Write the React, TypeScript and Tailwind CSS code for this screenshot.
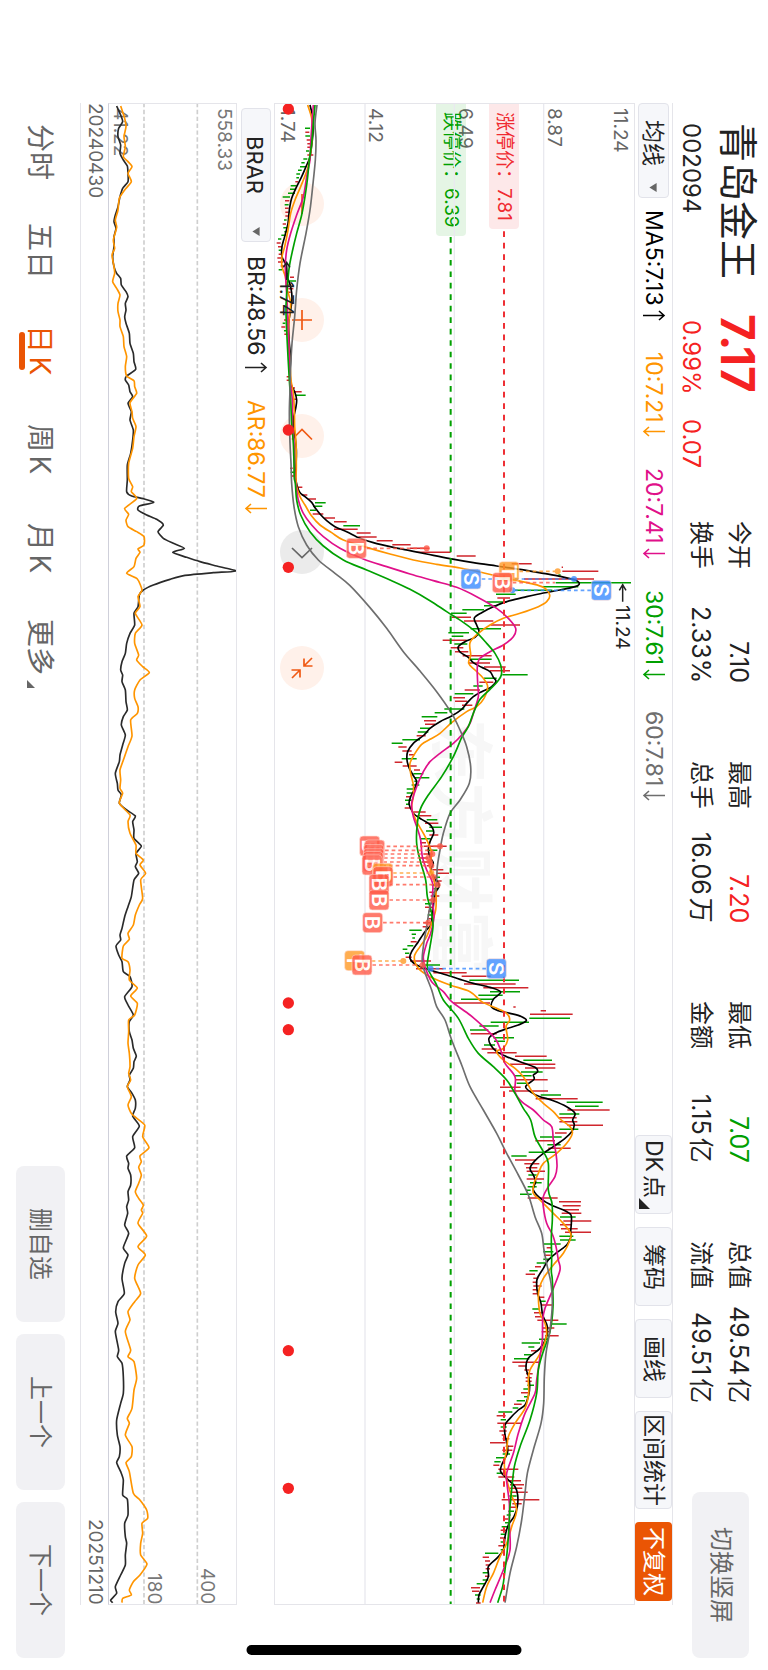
import React from "react";

type Segment = [offset: number, points: string];

/* Chart geometry is stored in thirds of a pixel; v runs along time, u along price. */

function collect(segments: Segment[]): number[][] {
  const out: number[][] = [];
  let last = -Infinity;
  for (const [offset, points] of segments) {
    for (const pair of points.split(" ")) {
      const [u, v] = pair.split(",").map(Number);
      if (v + offset > last) {
        last = v + offset;
        out.push([u, last]);
      }
    }
  }
  return out;
}

function smooth(segments: Segment[], tension: number): string {
  const p = collect(segments);
  let d = `M${p[0][0]} ${p[0][1]}`;
  for (let i = 0; i < p.length - 1; i++) {
    const a = p[Math.max(i - 1, 0)];
    const b = p[i];
    const c = p[i + 1];
    const e = p[Math.min(i + 2, p.length - 1)];
    d += `C${b[0] + (c[0] - a[0]) * tension} ${b[1] + (c[1] - a[1]) * tension} ${c[0] - (e[0] - b[0]) * tension} ${c[1] - (e[1] - b[1]) * tension} ${c[0]} ${c[1]}`;
  }
  return d;
}

const MA5: Segment[] = [
  [0, "150,45 158,80 160,110 157,150 150,200 138,230 125,260 110,290 95,325 88,360 84,400 74,440 66,470 66,500 78,525 82,560 92,590 96,625 92,660 86,700 88,760 92,800 90,850 94,885 104,905 110,930 107,955 100,990 104,1030 109,1080 108,1130 107,1165"],
  [1050, "118,155 135,170 155,187 163,200 180,222 200,242 225,260 260,275 300,295 340,308 400,322 450,332 500,342 570,356 640,368 710,378 780,388 850,400 900,409 945,420 958,431 945,440 900,450 850,459 800,470 750,482 700,500 665,518 643,534 650,555 657,575 645,592 615,605 595,620 600,636 625,652 640,668 665,682 690,695 700,712 708,724 692,742 665,755 640,770 620,790 605,808 575,828 540,845 510,865 492,885"],
  [1830, "460,130 443,155 441,180 448,205 462,230 470,245 462,270 452,290 447,310 452,325 462,342 485,358 508,372 518,385 521,400 510,425 505,450 512,475 520,490 512,510 520,530 538,555 528,575 522,600 518,640 512,675 495,695 475,725 455,755 450,775 470,795 510,810 560,825 600,838"],
  [2610, "640,70 690,82 722,96 700,118 694,140 715,152 750,160 785,170 799,182 775,195 740,206 705,220 687,235 692,255 710,275 740,290 780,305 825,322 833,335 820,345 822,358 797,380 815,398 840,410 880,422 920,440 945,460 938,480 943,495 935,515 915,535 880,560 850,580 825,602 810,625 820,645 827,665 820,690 845,718 880,738 915,752 933,765 934,790 932,815 933,830 920,855 890,878 865,900 850,925 832,955"],
  [3510, "830,75 833,100 843,130 848,165 862,200 858,235 840,265 805,295 798,325 806,350 809,380 806,405 795,435 775,450 750,475 735,495 735,525 742,555 742,580 725,615 722,635 740,655 765,680 773,705 772,740 762,770 745,795 735,830 730,870 710,895 685,920 685,950 670,980 657,1005 655,1028"],
];

const MA10: Segment[] = [
  [0, "143,45 155,85 157,130 153,180 143,235 122,290 105,330 92,370 84,420 74,470 66,500 66,530 76,560 82,600 92,640 86,700 86,760 90,820 93,870 100,910 103,960 104,1010 108,1060 109,1130 108,1165"],
  [1050, "110,140 120,170 135,195 155,228 180,255 215,278 250,300 320,322 390,342 460,360 530,373 600,384 660,396 710,408 765,420 810,430 850,442 869,465 860,485 835,500 780,520 730,535 690,555 655,580 630,608 632,645 626,670 645,690 670,715 683,740 672,775 650,800 620,815 575,848 540,880 510,898"],
  [1830, "485,133 465,160 450,190 452,220 460,255 460,290 455,325 470,365 490,400 505,430 515,460 510,500 522,540 528,580 527,630 515,670 500,710 480,740 463,770 475,805 510,830"],
  [2610, "570,75 630,95 665,125 710,145 740,160 749,180 738,200 743,240 730,265 710,275 730,300 765,325 790,350 820,400 850,430 880,455 900,477 930,500 937,520 920,550 890,580 850,610 835,640 822,670 820,700 840,720 880,760 910,790 932,820 930,840 910,880 880,915 850,955"],
  [3510, "838,85 835,110 840,160 855,190 860,220 850,260 835,290 810,330 805,360 806,400 795,445 765,490 745,530 740,570 733,610 738,650 752,700 770,750 755,800 740,850 720,890 700,940 680,980 668,1028"],
];

const MA20: Segment[] = [
  [0, "160,45 156,100 152,160 150,210 140,260 130,320 110,375 92,430 80,480 76,530 78,580 82,650 84,720 88,800 90,870 97,930 97,1000 102,1060 103,1120 104,1165"],
  [1050, "107,130 115,180 130,220 155,255 190,290 240,325 310,357 380,380 450,402 520,422 590,442 650,470 710,505 745,535 767,565 760,590 730,615 690,635 660,655 652,680 653,730 655,770 643,810 630,850 605,885"],
  [1830, "580,130 540,160 510,185 490,215 470,260 455,310 460,350 472,385 482,420 487,470 500,510 518,550 517,600 522,650 512,700 500,730 490,770 495,800"],
  [2610, "515,65 550,95 575,125 630,165 670,200 705,235 722,270 735,310 765,350 765,395 785,425 820,450 850,480 875,500 880,540 888,580 891,620 885,650 865,680 850,710 850,740 860,790 878,825 888,860 895,900 900,930"],
  [3510, "880,85 855,145 848,180 847,240 840,290 830,360 825,400 795,460 775,520 760,580 740,640 742,680 748,730 748,790 750,870 730,930 705,990 690,1028"],
];

const MA30: Segment[] = [
  [0, "165,45 160,100 155,160 148,210 142,270 135,320 125,375 110,430 98,480 88,530 82,590 78,650 80,720 84,800 88,870 92,930 95,1000 100,1060 102,1120 103,1165"],
  [1050, "106,130 110,180 122,225 150,275 190,318 250,360 320,390 390,420 450,448 510,482 560,515 610,547 650,578 680,610 705,640 722,675 724,705 712,725 690,748 660,778 640,820 625,860 605,893"],
  [1830, "580,170 545,230 505,285 482,325 472,370 470,430 480,480 497,540 502,590 515,640 519,680 510,740 502,790"],
  [2610, "505,30 530,75 550,120 595,175 625,235 655,280 700,320 740,360 765,400 790,445 812,480 825,530 850,575 865,610 865,690 876,730 877,780 874,830 875,900 874,935"],
  [3510, "877,60 879,140 870,215 848,280 835,330 830,400 810,480 780,560 763,620 755,690 750,740 747,800 742,870 735,930 728,980 713,1028"],
];

const MA60: Segment[] = [
  [0, "171,45 165,100 168,150 166,210 158,290 150,360 138,430 120,520 110,600 104,680 96,760 92,830 90,900 88,970 90,1060 93,1120"],
  [1050, "95,130 102,200 115,260 140,315 175,360 225,400 270,437 330,503 380,565 430,635 480,693 530,755"],
  [1830, "575,40 600,90 620,140 632,200 628,250 600,300 570,340 550,400 540,450 532,500 528,560 510,620 500,680 490,740"],
  [2610, "488,15 515,90 530,140 555,180 575,240 605,315 630,380 670,450 710,520 740,580 775,645 805,705 825,770 845,820 852,870 862,920"],
  [3510, "873,70 877,130 870,210 858,280 853,350 851,430 843,490 820,570 802,640 795,700 785,780 770,860 750,940 735,1028"],
];

const BR: Segment[] = [
  [0, "350,48 362,75 368,95 356,115 354,140 362,165 360,190 370,210 382,228 384,250 384,275 368,295 360,320 354,350 346,375 342,395 348,415 342,440 342,470 338,500 342,530 350,550 362,565 364,585 378,605 384,620 376,640 378,660 374,680 378,700 388,730 390,760 400,790 402,815 407,838 380,858 376,870 386,885 390,905 398,920 384,940 394,965 390,990 400,1020 398,1050 392,1090 382,1125 382,1170 380,1205 395,1218"],
  [1170, "430,56 461,67 418,78 414,90 440,105 470,118 490,135 474,155 490,175 520,190 553,205 518,217 560,232 600,245 650,258 708,273 640,278 555,286 510,298 460,315 430,330 418,345 414,380 402,400 404,435 390,460 380,490 376,520 366,545 362,570 368,585 366,605 376,630 378,665 382,690 370,710 364,735 376,765 368,795 360,825 358,845 346,880 352,910 354,930 364,945 358,970 380,990 406,1008 398,1025 402,1050 402,1075 424,1098 408,1120 412,1145 406,1160 416,1180 402,1200"],
  [2370, "394,50 384,80 374,110 366,145 360,165 362,180 348,198 356,225 366,245 370,275 390,290 396,320 374,350 384,375 400,405 388,425 388,455 396,480 400,505 409,528 402,545 400,565 388,585 390,600 382,620 396,640 406,660 406,685 398,708 418,738 398,770 404,803 380,828 386,850 384,865 392,885 392,915 384,935 386,960 380,980 383,1000 374,1035 386,1060 370,1103 384,1125 374,1150 366,1195"],
  [3510, "373,100 354,125 347,155 354,190 346,215 356,270 352,290 366,310 370,350 370,400 362,430 350,480 352,525 360,560 358,590 350,608 362,635 370,660 368,705 382,718 384,765 374,790 376,830 380,850 376,885 376,915 362,945 346,980 350,1000 332,1020 338,1028"],
];

const AR: Segment[] = [
  [0, "362,48 374,85 378,110 372,140 376,170 370,200 384,215 396,230 384,250 394,275 374,300 358,325 354,360 346,390 350,412 340,450 344,475 336,495 342,530 344,550 338,575 350,595 360,615 354,640 354,665 360,690 360,710 370,740 372,770 380,800 376,830 380,858 402,872 404,890 410,910 390,938 396,965 398,985 408,1010 402,1040 398,1075 386,1120 386,1165 398,1190 394,1205 410,1226"],
  [1170, "374,85 386,103 378,120 384,140 410,155 432,170 432,195 414,207 420,217 408,235 402,260 380,280 412,297 426,330 414,350 420,380 406,400 426,435 406,460 404,490 416,525 410,540 428,560 448,578 420,600 404,630 404,655 414,680 412,700 392,720 396,768 384,800 372,835 360,870 362,900 360,925 368,940 358,970 390,1005 384,1025 390,1060 408,1095 408,1120 430,1140 420,1155 437,1180 422,1200"],
  [2370, "428,55 418,75 406,105 400,135 384,160 388,178 370,198 366,235 384,245 390,270 388,300 412,324 392,348 412,370 404,405 386,420 386,455 384,490 388,520 390,560 386,580 392,600 382,620 394,650 384,675 396,703 434,735 428,770 447,803 420,828 424,845 416,862 424,885 416,910 406,935 416,955 430,975 424,990 428,1000 414,1030 440,1068 414,1100 436,1125 414,1155 404,1195"],
  [3510, "422,100 404,125 384,155 390,180 376,215 392,270 384,290 402,305 410,355 402,390 396,445 382,475 388,490 376,525 396,560 394,590 378,608 388,635 400,700 418,718 440,750 443,775 426,790 428,820 422,850 422,885 441,912 420,945 400,965 388,990 394,1005 368,1015 366,1028"],
];

/* R = up day, G = down day, then time, low, high. */
const CANDLES: Segment[] = [
  [0, "G115,135,150 R127,136,148 G138,136,150 R150,140,152 R161,142,152 R172,142,152 G183,138,148 R195,142,160 G207,130,142 G218,124,134 G230,120,138 G241,114,125 G252,109,120 G263,109,117 R275,106,114 G287,92,110 G298,90,108 G310,84,105 G321,68,90 R332,75,88 G344,74,86 R355,75,86 R367,76,86 R378,76,88 G390,72,80 R402,68,78 G413,70,82 G425,73,82 G436,64,74 G447,54,64 R459,50,62 R470,54,66 G481,56,66 R493,56,68 R504,52,66 R516,54,70 R528,62,74 G539,56,66 R551,72,84 R562,90,102 G573,88,108 R585,76,88 R596,85,100 R607,80,92 R690,72,84 G700,68,76 R711,64,76 G722,72,80 R733,73,83 R860,80,88 R871,80,90 R894,95,105 R905,100,125 G916,105,137 R928,98,108 R1135,90,98 G1147,92,102 R1158,94,104"],
  [1050, "R142,113,127 R165,125,142 R177,145,168 G188,165,197 G199,160,187 G211,150,168 R222,158,190 R234,193,225 R245,222,260 G257,250,300 R268,222,293 R279,290,332 R291,295,350 R302,350,398 R314,397,452 R325,450,508 R337,470,572 R348,590,647 R371,755,815 R382,905,909 R394,907,1015 G405,895,902 R417,792,1002 G428,887,1113 G440,848,955 G451,765,877 G463,708,767 R474,712,750 G486,680,740 G497,672,712 G509,607,672 G520,573,620 R532,575,633 R543,612,700 R555,692,780 G566,632,723 G578,565,627 G589,575,610 R601,548,620 G612,583,622 R623,572,610 R635,585,625 R647,608,695 G658,628,695 R669,625,690 R681,672,737 R692,690,750 G704,727,803 G715,672,710 R727,658,700 G738,640,668 R750,614,660 G761,584,640 R773,580,615 R784,585,622 R796,606,637 G807,553,613 G818,524,562 G830,485,532 R842,492,528 R853,495,525 G865,480,510 G876,473,505 R887,470,497"],
  [1830, "G119,427,480 G130,395,428 R141,415,440 R153,427,455 R164,447,463 G176,425,470 R187,404,427 R198,428,470 R210,462,480 G221,460,490 G233,465,508 G244,463,472 G255,455,478 G267,440,465 G279,440,460 R290,438,450 G301,435,455 G313,438,450 R324,434,455 R336,460,497 R347,472,514 G359,500,532 R370,495,535 G382,508,546 G393,498,520 R405,508,535 G416,483,512 R428,480,498 R439,492,560 G451,500,532 R462,490,518 R474,480,505 R486,485,515 R497,500,512 R509,517,550 R520,530,567 G532,518,540 R543,520,545 G555,515,540 G566,520,535 R577,508,525 R588,512,538 R600,505,528 G611,495,515 R622,495,520 R634,505,520 G645,503,520 R656,505,520 R668,490,512 R680,488,505 G691,448,485 G703,455,468 G714,457,465 R725,452,470 G737,442,460 G748,428,442 G760,435,448 R772,437,455 R783,450,513 G795,490,540 R806,468,550 R818,520,620 R829,605,692 G841,628,777 R852,612,767 R863,670,805 G875,690,780 G886,655,728 G898,603,700"],
  [2610, "R129,580,690 R141,760,767 R152,842,858 R163,810,938 G175,808,930 G187,692,807 G198,658,716 G210,630,685 R221,632,710 G233,700,762 G244,702,735 G255,672,705 R267,665,710 R278,682,770 R289,765,860 G301,790,876 R313,750,886 R324,795,886 G336,783,848 G347,765,815 R359,765,863 G370,770,800 R382,720,782 R393,747,864 G405,842,903 R416,827,953 G427,920,1028 G439,945,1016 R450,922,1049 G462,898,958 R473,895,950 R485,898,952 R496,922,1029 G508,898,955 R519,885,920 G531,840,905 R542,826,885 G554,862,902 R565,865,932 G577,806,885 G588,754,800 R600,765,825 R611,793,838 R623,798,832 R634,800,855 G645,805,830 R657,800,852 G668,810,845 G680,803,830 G691,798,812 G703,780,815 R714,803,893 R725,897,963 R737,908,962 R749,910,957 R760,905,964 G771,900,947 R783,910,994 R794,900,935 R806,903,953 R817,915,993 G829,898,940 G840,900,947 G852,850,902 R863,860,873 G875,850,880 R886,852,872 G898,850,868 G909,830,857 R920,825,843 G932,808,833 R943,797,825 R955,820,835"],
  [3510, "R67,818,832 R78,820,845 R89,818,832 R101,818,835 R112,835,853 G124,840,857 R135,845,880 G147,817,838 R158,822,845 R170,825,845 R181,832,895 G192,870,920 R204,848,883 R215,845,870 R227,855,896 G238,837,862 G249,785,840 G261,805,823 R272,813,830 G284,792,815 G296,762,808 R307,757,838 R318,775,800 R330,793,808 R341,798,818 R353,797,815 R364,797,815 G376,802,822 G387,790,810 R398,783,810 G410,792,802 G422,770,795 R433,762,785 G444,758,775 G456,715,757 R467,710,737 G479,722,738 R490,712,783 G501,722,740 R513,718,740 R525,725,738 R536,728,748 R548,690,737 R559,737,760 R571,727,757 G582,728,750 G593,708,733 G605,703,722 R616,700,718 R628,715,775 G640,710,728 R651,715,763 R662,740,783 R674,750,792 R685,748,787 R697,752,803 G708,748,770 R719,725,838 R731,757,785 R742,750,768 G754,745,762 G765,740,752 R777,730,745 G788,735,750 G800,725,745 R811,722,740 G823,722,735 R834,720,738 G846,722,735 R857,715,738 G869,722,735 G880,675,715 R892,668,687 R903,675,690 R915,677,690 R926,677,690 G938,668,685 R949,675,688 G960,668,685 G971,650,675 R983,633,660 R994,636,658 G1005,645,662 G1017,650,660 R1029,648,662"],
];

function candlePath(kind: string): string {
  let d = "";
  for (const [offset, list] of CANDLES) {
    for (const item of list.split(" ")) {
      if (item[0] !== kind) continue;
      const [v, lo, hi] = item.slice(1).split(",").map(Number);
      d += `M${lo} ${v + offset}H${hi}`;
    }
  }
  return d;
}

const TRADE_COLORS: Record<string, string> = { B: "#ff5a48", S: "#3b8bff", T: "#ff9a26" };

/* kind, badge u, badge v, leader v, leader start, leader end, whether the end has a dot */
const TRADES: [string, number, number, number, number, number, boolean][] = [
  ["B", 289, 1375, 1375, 320, 500, true],
  ["T", 747, 1445, 1444, 778, 893, true],
  ["S", 633, 1467, 1467, 665, 942, true],
  ["B", 727, 1478, 1478, 758, 885, false],
  ["S", 1024, 1501, 1501, 993, 757, true],
  ["B", 329, 2268, 2269, 360, 540, true],
  ["B", 344, 2280, 2281, 375, 520, false],
  ["B", 341, 2293, 2292, 372, 517, true],
  ["B", 341, 2305, 2304, 372, 505, true],
  ["B", 339, 2315, 2316, 370, 510, true],
  ["B", 336, 2325, 2327, 367, 514, true],
  ["T", 368, 2350, 2349, 399, 514, true],
  ["B", 369, 2360, 2361, 400, 520, true],
  ["B", 357, 2383, 2384, 388, 533, true],
  ["B", 357, 2430, 2430, 388, 520, true],
  ["B", 338, 2498, 2498, 369, 505, true],
  ["T", 284, 2612, 2613, 315, 430, true],
  ["B", 306, 2625, 2625, 337, 488, true],
  ["S", 709, 2636, 2636, 678, 512, true],
];

const EVENT_DOTS = [57, 1020, 1432, 2739, 2819, 3782, 4195];

function PriceChart() {
  return (
    <svg
      viewBox="45 42 1077 4500"
      preserveAspectRatio="none"
      className="pointer-events-none absolute inset-0 h-full w-full [writing-mode:horizontal-tb]"
      fill="none"
      role="img"
      aria-label="日K线图"
    >
      <path d="M315 39V4545M583 39V4545M851 39V4545" stroke="#e9e9ef" strokeWidth="4" />
      <path d={candlePath("R")} stroke="#d0262d" strokeWidth="4.5" />
      <path d={candlePath("G")} stroke="#009f00" strokeWidth="4.5" />
      <g strokeWidth="5" strokeLinejoin="round">
        <path d={smooth(MA5, 0.16)} stroke="#000" />
        <path d={smooth(MA10, 0.16)} stroke="#ff9500" />
        <path d={smooth(MA20, 0.16)} stroke="#e0108a" />
        <path d={smooth(MA30, 0.16)} stroke="#00a000" />
        <path d={smooth(MA60, 0.16)} stroke="#6e6e6e" />
      </g>
      <path d="M732 424V4545" stroke="#ee2f35" strokeWidth="6" strokeDasharray="17 17.4" />
      <path d="M572 441V4545" stroke="#00a000" strokeWidth="6" strokeDasharray="17 17.4" />
      {EVENT_DOTS.map((v) => (
        <circle key={v} cx="85" cy={v} r="17" fill="#f52222" />
      ))}
      {TRADES.map(([kind, , , v, from, to, dot], i) => (
        <g key={i} opacity="0.8">
          <path d={`M${from} ${v}H${to}`} stroke={TRADE_COLORS[kind]} strokeWidth="5" strokeDasharray="11 9" />
          {dot && <circle cx={to} cy={v} r="9" fill={TRADE_COLORS[kind]} />}
        </g>
      ))}
      {TRADES.map(([kind, u, v], i) => (
        <g key={i} transform={`translate(${u} ${v}) rotate(90)`} opacity="0.8">
          <rect x="-30" y="-30" width="60" height="60" rx="10" fill={TRADE_COLORS[kind]} stroke="#ffd9d0" strokeWidth="2" />
          <text y="22" textAnchor="middle" className="font-['Inter',sans-serif] text-[62px] font-semibold" fill="#fff">
            {kind}
          </text>
        </g>
      ))}
      <g stroke="#222" strokeWidth="4.5">
        <path d="M1088 1535V1482M1078 1501L1088 1484L1098 1501" />
        <path d="M80 570V515M70 532L80 517L90 532" />
      </g>
      <g fill="#222" className="font-['Inter',sans-serif] text-[57px]">
        <text transform="translate(1069 1545) rotate(90)">11.24</text>
        <text transform="translate(60 574) rotate(90)">1.74</text>
      </g>
    </svg>
  );
}

function BrarChart() {
  return (
    <svg
      viewBox="327 42 381 4500"
      preserveAspectRatio="none"
      className="absolute inset-0 h-full w-full"
      fill="none"
      role="img"
      aria-label="BRAR"
    >
      <path d="M432 39V4545M592 39V4545" stroke="#cfcfcf" strokeWidth="5" strokeDasharray="13 7.6" />
      <g strokeWidth="5" strokeLinejoin="round">
        <path d={smooth(BR, 0.1)} stroke="#2a2a2a" />
        <path d={smooth(AR, 0.1)} stroke="#ff9500" />
      </g>
    </svg>
  );
}

function Arrow({ up = false }: { up?: boolean }) {
  return (
    <svg viewBox="0 0 24 11" className="h-[11px] w-6 shrink-0" fill="none" stroke="currentColor" strokeWidth="1.6" aria-hidden="true">
      {up ? <path d="M1 5.5H22M17 1L22 5.5L17 10" /> : <path d="M23 5.5H2M7 1L2 5.5L7 10" />}
    </svg>
  );
}

function Caret() {
  return (
    <svg viewBox="0 0 8 10" className="pointer-events-none absolute bottom-[6px] left-[11px] h-[9px] w-2" aria-hidden="true">
      <path d="M0 5L8 0V10Z" fill="#666" />
    </svg>
  );
}

const STATS = [
  { label: "今开", value: "7.10", tone: "" },
  { label: "最高", value: "7.20", tone: "text-[#f52222]" },
  { label: "最低", value: "7.07", tone: "text-[#009f00]" },
  { label: "总值", value: "49.54亿", tone: "" },
  { label: "换手", value: "2.33%", tone: "" },
  { label: "总手", value: "16.06万", tone: "" },
  { label: "金额", value: "1.15亿", tone: "" },
  { label: "流值", value: "49.51亿", tone: "" },
];

const AVERAGES = [
  { text: "MA5:7.13", tone: "text-black", up: true },
  { text: "10:7.21", tone: "text-[#ff9500]", up: false },
  { text: "20:7.41", tone: "text-[#e0108a]", up: false },
  { text: "30:7.61", tone: "text-[#00a000]", up: false },
  { text: "60:7.81", tone: "text-[#6e6e6e]", up: false },
];

const PERIODS = ["分时", "五日", "日K", "周K", "月K", "更多"];

function Header() {
  return (
    <header className="flex w-[95px] shrink-0 pt-[123px] pb-3">
      <div className="grid h-[398px] shrink-0 grid-cols-[191px_auto] content-start justify-start pr-2">
        <h1 className="text-[39px] leading-[44px]">青岛金王</h1>
        <strong className="text-[46px] leading-[44px] font-bold text-[#f52222]">7.17</strong>
        <span className="mr-[11px] text-[24px] leading-[28px]">002094</span>
        <span className="mr-[11px] flex gap-6 pt-[6px] text-[24px] leading-[28px] text-[#f52222]">
          <span>0.99%</span>
          <span>0.07</span>
        </span>
      </div>
      <dl className="grid shrink-0 grid-cols-[repeat(4,162px)] content-start gap-x-[78px] pr-[10px] text-[24px] leading-[38px]">
        {STATS.map((s) => (
          <div key={s.label} className="flex justify-between">
            <dt>{s.label}</dt>
            <dd className={`text-[25px] ${s.tone}`}>{s.value}</dd>
          </div>
        ))}
      </dl>
      <button type="button" className="mt-auto mr-[19px] flex h-[166px] w-[57px] items-center justify-center rounded-lg bg-[#f1f1f4] text-[24px] text-[#666]">
        切换竖屏
      </button>
    </header>
  );
}

function Toolbar() {
  const box = "flex h-[79px] w-[37px] items-center justify-center rounded border border-[#e2e3ea] bg-[#f6f7fa]";
  return (
    <div className="mt-[103px] mb-[65px] flex w-[38px] shrink-0 items-center border-r border-[#e5e5ea] text-[23px] leading-[30px]">
      <div className="relative h-[95px] w-[31px]">
        <select aria-label="均线" className="h-full w-full appearance-none rounded border border-[#e2e3ea] bg-[#f6f7fa] pt-4">
          <option>均线</option>
        </select>
        <Caret />
      </div>
      <div className="mt-3 flex items-center gap-[31px]">
        {AVERAGES.map((a) => (
          <span key={a.text} className={`flex items-center gap-1 ${a.tone}`}>
            {a.text}
            <Arrow up={a.up} />
          </span>
        ))}
      </div>
      <div className="mt-auto mb-1 flex gap-[13px]">
        <button type="button" className={`${box} relative pb-3`}>
          DK点
          <svg viewBox="0 0 11 11" className="absolute bottom-1 left-[3px] h-[11px] w-[11px]" aria-hidden="true">
            <path d="M0 0L11 11H0Z" fill="#222" />
          </svg>
        </button>
        <button type="button" className={box}>筹码</button>
        <button type="button" className={box}>画线</button>
        <button type="button" className="flex h-[98px] w-[37px] items-center justify-center rounded border border-[#e2e3ea] bg-[#f6f7fa]">区间统计</button>
        <button type="button" className="flex h-[79px] w-[37px] items-center justify-center rounded bg-[#ea5504] text-white">不复权</button>
      </div>
    </div>
  );
}

function ChartTools() {
  const round = "flex size-[44px] items-center justify-center rounded-full bg-[#fff1ea]";
  const icon = "h-[22px] w-[22px]";
  const stroke = { fill: "none", stroke: "#f05a14", strokeWidth: 1.7 };
  return (
    <div className="absolute top-[78px] left-[5px] flex gap-[72px]">
      <button type="button" aria-label="缩小" className={round}>
        <svg viewBox="0 0 22 22" className={icon} {...stroke}><path d="M11 1V21" /></svg>
      </button>
      <button type="button" aria-label="放大" className={round}>
        <svg viewBox="0 0 22 22" className={icon} {...stroke}><path d="M11 1V21M1 11H21" /></svg>
      </button>
      <button type="button" aria-label="左移" className={round}>
        <svg viewBox="0 0 22 22" className={icon} {...stroke}><path d="M1 14.5L11 4.5L21 14.5" /></svg>
      </button>
      <button type="button" aria-label="右移" className="flex size-[44px] items-center justify-center rounded-full bg-[#ebebeb]">
        <svg viewBox="0 0 22 22" className={icon} fill="none" stroke="#666" strokeWidth="1.7"><path d="M1 7L11 16.500L21 7" /></svg>
      </button>
      <button type="button" aria-label="收起" className={round}>
        <svg viewBox="0 0 22 22" className={icon} {...stroke}>
          <path d="M21 1L13 9M13 1.500V9H21.500M1 21L9 13M9 20.500V13H0.500" />
        </svg>
      </button>
    </div>
  );
}

function LimitTag({ className, label, value }: { className: string; label: string; value: string }) {
  return (
    <div className={`absolute top-0 flex w-[30px] -translate-x-1/2 items-center rounded-b px-[5px] pt-2 pb-2 text-[19px] leading-[20px] whitespace-nowrap ${className}`}>
      {label}：{value}
    </div>
  );
}

function MainChart() {
  const tick = "absolute top-1 text-[19px] leading-[20px] text-[#666]";
  return (
    <section className="relative mt-[103px] mb-[65px] min-w-0 flex-1 border border-[#e5e5ea]">
      <div aria-hidden="true" className="absolute top-[41%] left-[43%] text-[64px] leading-[64px] font-bold text-[#f7f7f7]">
        东方财富
      </div>
      <ChartTools />
      <span className={`${tick} left-[2px]`}>1.74</span>
      <span className={`${tick} left-[25%]`}>4.12</span>
      <span className={`${tick} left-[50%]`}>6.49</span>
      <span className={`${tick} left-[75%]`}>8.87</span>
      <span className={`${tick} right-1`}>11.24</span>
      <LimitTag className="left-[63.7%] bg-[#fde8e9] text-[#f02a30]" label="涨停价" value="7.81" />
      <LimitTag className="left-[49%] bg-[#00a000]/10 text-[#00a000]" label="跌停价" value="6.39" />
      <PriceChart />
    </section>
  );
}

function IndicatorBar() {
  return (
    <div className="mt-[108px] flex w-[37px] shrink-0 items-center text-[23px] leading-[30px]">
      <div className="relative h-[134px] w-[30px]">
        <select aria-label="指标" className="h-full w-full appearance-none rounded border border-[#e2e3ea] bg-[#f6f7fa] pt-[27px] text-[22px]">
          <option>BRAR</option>
        </select>
        <Caret />
      </div>
      <div className="mt-[14px] flex items-center gap-[27px]">
        <span className="flex items-center gap-[6px]">
          BR:48.56
          <Arrow up />
        </span>
        <span className="flex items-center gap-[6px] text-[#ff9500]">
          AR:86.77
          <Arrow />
        </span>
      </div>
    </div>
  );
}

function SubChart() {
  const tick = "absolute text-[19px] leading-[20px] text-[#777]";
  return (
    <section className="relative mt-[103px] mb-[65px] w-[129px] shrink-0 border border-[#e5e5ea] border-l-[#cfd0da]">
      <span className={`${tick} top-1 right-[2px]`}>558.33</span>
      <span className={`${tick} top-1 left-px`}>41.22</span>
      <span className={`${tick} bottom-0 left-[35px]`}>180</span>
      <span className={`${tick} bottom-0 left-[88px]`}>400</span>
      <BrarChart />
    </section>
  );
}

function PeriodTabs() {
  const action = "flex h-[156px] w-[49px] items-center justify-center rounded-lg bg-[#f1f1f4] text-[24px]";
  return (
    <footer className="flex w-20 shrink-0 items-center pt-[103px] pb-3 text-[#666]">
      <nav className="flex text-[28px] leading-[34px]">
        {PERIODS.map((p) =>
          p === "日K" ? (
            <button key={p} type="button" aria-current="page" className="relative flex h-[99px] items-center justify-center text-[#ea5504]">
              {p}
              <span className="absolute top-[31px] -left-[4px] h-[38px] w-[6px] rounded-full bg-[#ea5504]" />
            </button>
          ) : (
            <button key={p} type="button" className="relative flex h-[99px] items-center justify-center">
              {p}
              {p === "更多" && (
                <svg viewBox="0 0 8 8" className="absolute bottom-[9px] left-1 h-2 w-2" aria-hidden="true">
                  <path d="M0 0L8 8H0Z" fill="#666" />
                </svg>
              )}
            </button>
          ),
        )}
      </nav>
      <div className="mt-auto flex gap-3">
        <button type="button" className={action}>删自选</button>
        <button type="button" className={action}>上一个</button>
        <button type="button" className={action}>下一个</button>
      </div>
    </footer>
  );
}

export default function App() {
  return (
    <main className="relative flex h-screen w-full flex-col overflow-hidden bg-white font-['Inter','Noto_Sans_CJK_SC',sans-serif] text-[#222] [text-autospace:normal] [text-orientation:sideways] [writing-mode:vertical-rl]">
      <Header />
      <Toolbar />
      <MainChart />
      <IndicatorBar />
      <SubChart />
      <div className="mt-[103px] mb-[65px] flex w-7 shrink-0 items-center justify-between border-l border-[#e5e5ea] text-[19px] leading-[20px] text-[#666]">
        <time>20240430</time>
        <time>20251210</time>
      </div>
      <PeriodTabs />
      <div className="absolute bottom-[15px] left-1/2 h-[10px] w-[275px] -translate-x-1/2 rounded-full bg-black" />
    </main>
  );
}
